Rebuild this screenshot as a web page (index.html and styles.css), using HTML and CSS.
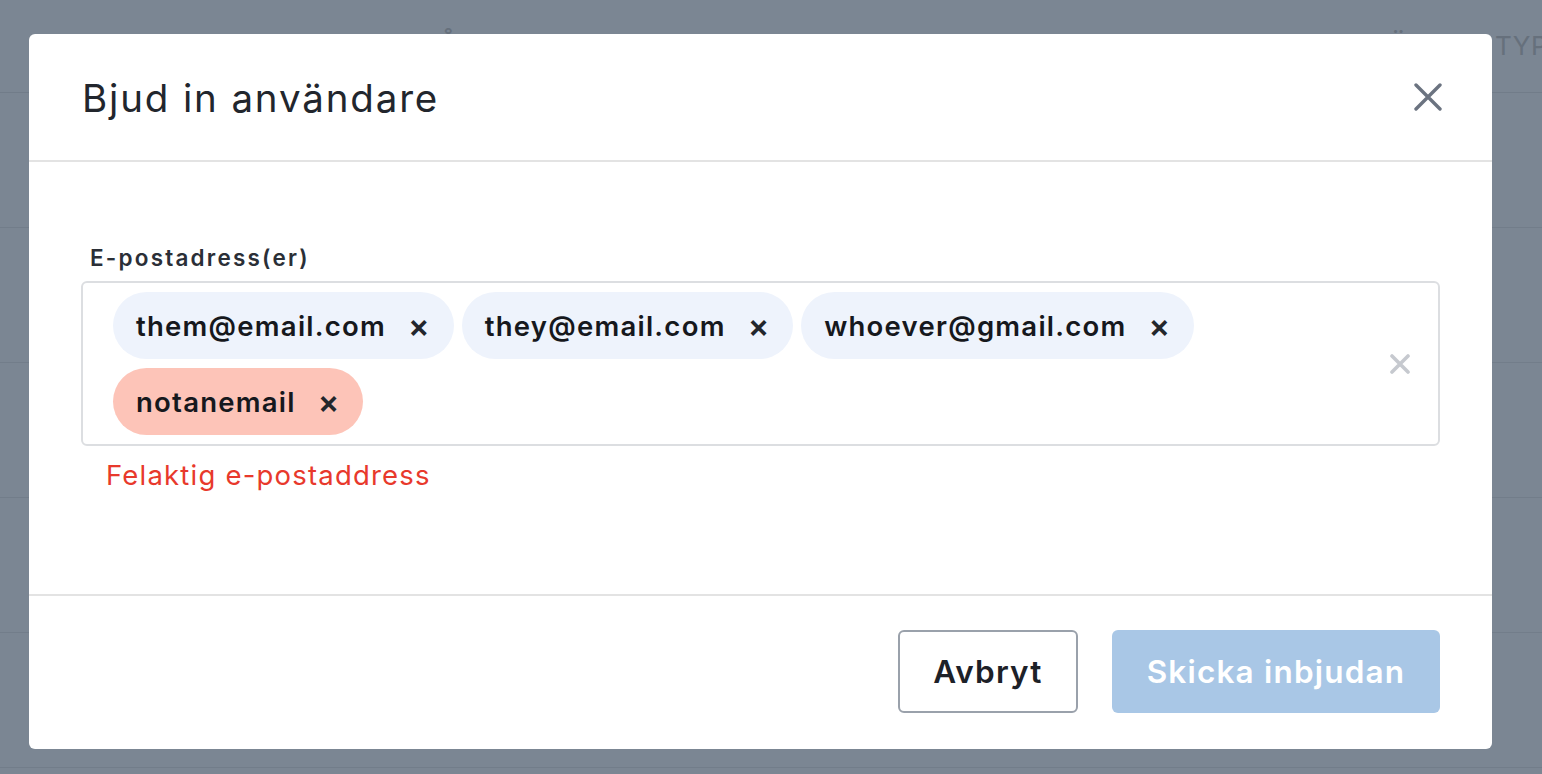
FILE: index.html
```html
<!DOCTYPE html>
<html lang="sv">
<head>
<meta charset="utf-8">
<title>Bjud in användare</title>
<link rel="stylesheet" href="styles.css">
</head>
<body>
<div class="page">
  <div class="page-head">
    <span class="col-head">ÅTKOMST</span>
    <span class="col-head">ÄN</span>
    <span class="col-head col-typ">TYP</span>
  </div>
  <div class="page-row"></div>
  <div class="page-row"></div>
  <div class="page-row"></div>
  <div class="page-row"></div>
  <div class="page-row"></div>
</div>
<div class="overlay">
  <div class="modal" role="dialog" aria-labelledby="mtitle">
    <div class="modal-header">
      <h2 id="mtitle" class="modal-title">Bjud in användare</h2>
      <button class="close-btn" aria-label="Stäng">
        <svg width="28" height="28" viewBox="0 0 28 28"><path d="M2 2L26 26M26 2L2 26" stroke="#6b7380" stroke-width="3.4" stroke-linecap="round" fill="none"/></svg>
      </button>
    </div>
    <div class="modal-body">
      <label class="field-label">E-postadress(er)</label>
      <div class="tag-input">
        <div class="tags">
          <span class="tag">them@email.com<span class="tag-x">×</span></span>
          <span class="tag">they@email.com<span class="tag-x">×</span></span>
          <span class="tag">whoever@gmail.com<span class="tag-x">×</span></span>
          <span class="tag tag-invalid">notanemail<span class="tag-x">×</span></span>
        </div>
        <span class="clear-all">
          <svg width="20" height="20" viewBox="0 0 20 20"><path d="M2 2L18 18M18 2L2 18" stroke="#c6c9cf" stroke-width="3.6" stroke-linecap="round" fill="none"/></svg>
        </span>
      </div>
      <div class="error-text">Felaktig e-postaddress</div>
    </div>
    <div class="modal-footer">
      <button class="btn btn-secondary">Avbryt</button>
      <button class="btn btn-primary" disabled>Skicka inbjudan</button>
    </div>
  </div>
</div>
</body>
</html>
```
FILE: styles.css
```css
* { box-sizing: border-box; }
html, body { margin: 0; padding: 0; }
body {
  width: 1542px;
  height: 774px;
  overflow: hidden;
  background: #7b8693;
  font-family: Inter, "Noto Sans", sans-serif;
  position: relative;
}
.page {
  display: flex;
  flex-direction: column;
}
.page-head {
  height: 93px;
  border-bottom: 1px solid #717c89;
  display: grid;
  grid-template-columns: 439px 950px 106px auto;
  align-items: start;
  padding-top: 31px;
  white-space: nowrap;
}
.col-head {
  font-size: 27px;
  line-height: 30px;
  letter-spacing: 3px;
  color: #66707c;
}
.col-head:first-child { grid-column: 2; }
.col-head:nth-child(2) { grid-column: 3; }
.col-head:nth-child(3) { grid-column: 4; }
.col-typ { letter-spacing: 0.5px; font-size: 26px; }
.page-row {
  height: 135px;
  border-bottom: 1px solid #727d8a;
}
.overlay {
  position: absolute;
  inset: 0;
  padding: 34px 50px 25px 29px;
}
.modal {
  width: 1463px;
  height: 715px;
  background: #fff;
  border-radius: 6px;
  display: flex;
  flex-direction: column;
}
.modal-header {
  height: 128px;
  border-bottom: 2px solid #e3e3e3;
  display: flex;
  align-items: center;
  justify-content: space-between;
  padding: 0 50px 0 53px;
  flex-shrink: 0;
}
.modal-title {
  margin: 0;
  font-size: 38.5px;
  font-weight: 400;
  color: #22262d;
  letter-spacing: 1.85px;
  padding-top: 2px;
}
.close-btn {
  background: none;
  border: 0;
  padding: 0;
  width: 28px;
  height: 28px;
  display: flex;
}
.modal-body {
  flex: 1;
  padding: 80px 52px 0 52px;
  display: flex;
  flex-direction: column;
}
.field-label {
  font-size: 22.5px;
  font-weight: 600;
  color: #2b2f37;
  padding-left: 9px;
  line-height: 32px;
  margin-bottom: 7px;
  letter-spacing: 2.2px;
}
.tag-input {
  height: 165px;
  border: 2px solid #dcdee1;
  border-radius: 6px;
  padding: 9px 28px 9px 30px;
  display: flex;
  align-items: center;
}
.tags {
  flex: 1;
  display: flex;
  flex-wrap: wrap;
  gap: 9px 8px;
  align-self: flex-start;
}
.tag {
  height: 67px;
  border-radius: 34px;
  background: #eef3fc;
  padding: 0 24px 0 23px;
  display: inline-flex;
  align-items: center;
  font-size: 27.5px;
  font-weight: 600;
  letter-spacing: 1.25px;
  color: #16181d;
}
.tag-invalid { background: #fdc4b8; }
.tag-x {
  margin-left: 22px;
  font-size: 32px;
  font-weight: 600;
  line-height: 1;
  letter-spacing: 0;
  color: #23262c;
}
.clear-all { display: flex; width: 20px; height: 20px; margin-left: 20px; }
.error-text {
  font-size: 27.5px;
  letter-spacing: 1.2px;
  color: #e8392c;
  padding-left: 25px;
  margin-top: 12px;
  line-height: 34px;
}
.modal-footer {
  height: 155px;
  border-top: 2px solid #e3e3e3;
  display: flex;
  justify-content: flex-end;
  align-items: flex-start;
  gap: 34px;
  padding: 34px 52px 0 0;
  flex-shrink: 0;
}
.btn {
  height: 83px;
  border-radius: 6px;
  font-family: Inter, "Noto Sans", sans-serif;
  font-size: 31.5px;
  letter-spacing: 1.2px;
  font-weight: 600;
}
.btn-secondary {
  width: 180px;
  background: #fff;
  border: 2px solid #9aa1ab;
  color: #1d2128;
}
.btn-primary {
  width: 328px;
  background: #a9c7e6;
  border: 0;
  color: #fff;
}
```
